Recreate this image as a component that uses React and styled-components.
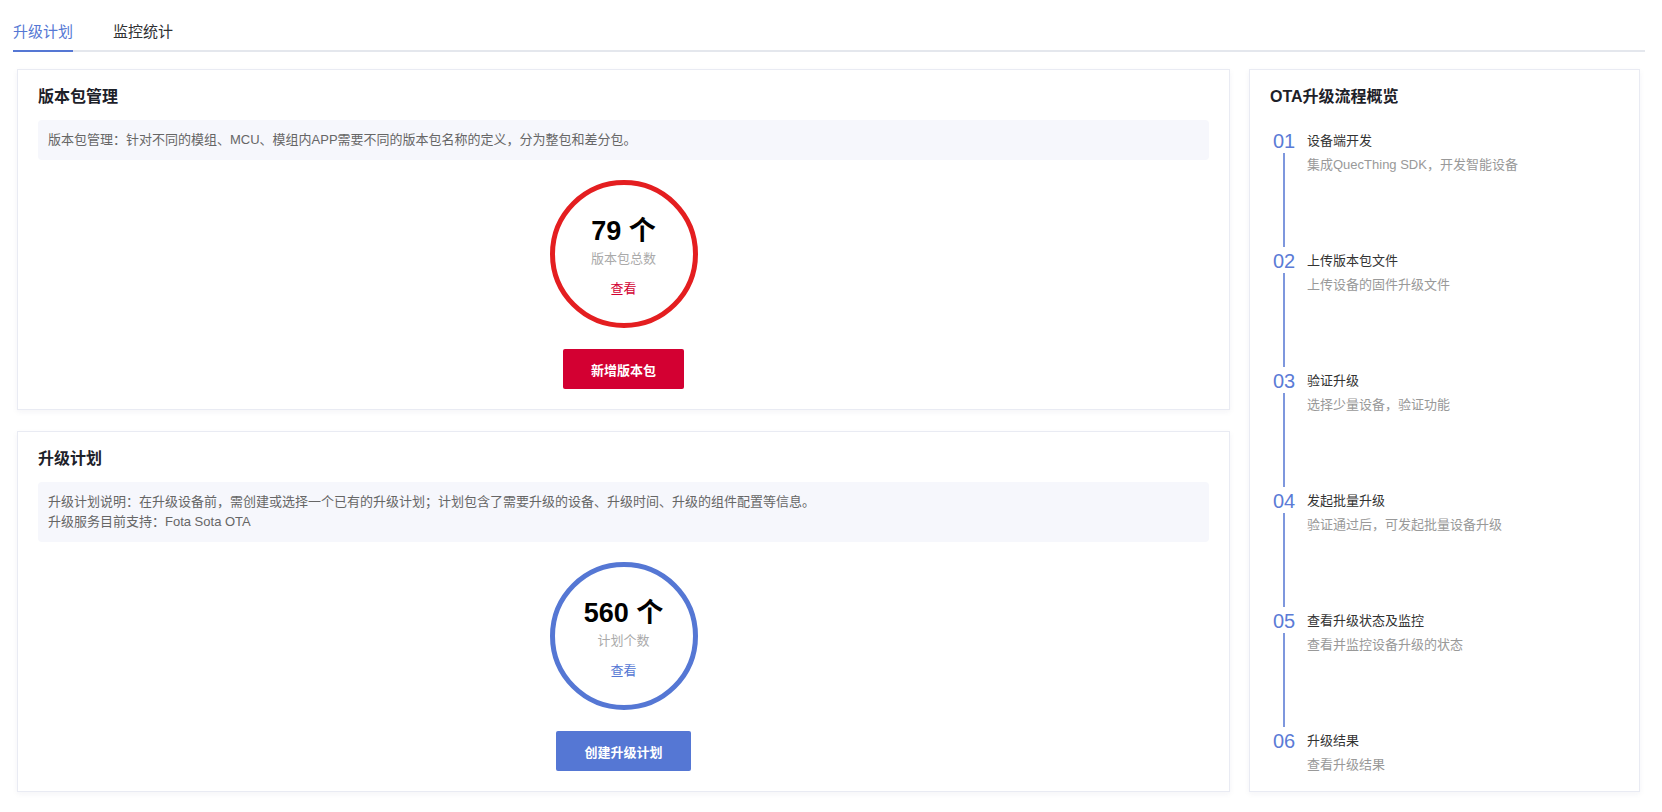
import styled, { createGlobalStyle } from "styled-components";

const steps = [
	{ no: "01", title: "设备端开发", desc: "集成QuecThing SDK，开发智能设备" },
	{ no: "02", title: "上传版本包文件", desc: "上传设备的固件升级文件" },
	{ no: "03", title: "验证升级", desc: "选择少量设备，验证功能" },
	{ no: "04", title: "发起批量升级", desc: "验证通过后，可发起批量设备升级" },
	{ no: "05", title: "查看升级状态及监控", desc: "查看并监控设备升级的状态" },
	{ no: "06", title: "升级结果", desc: "查看升级结果" },
];

const RED = "#d30032";
const BLUE = "#5577d4";

export default function App() {
	return (
		<Page>
			<GlobalStyle />
			<TabBar>
				<Tab $active>升级计划</Tab>
				<Tab>监控统计</Tab>
			</TabBar>
			<Content>
				<LeftColumn>
					<Card>
						<CardTitle>版本包管理</CardTitle>
						<InfoBox>版本包管理：针对不同的模组、MCU、模组内APP需要不同的版本包名称的定义，分为整包和差分包。</InfoBox>
						<StatBlock>
							<Circle $ring="#e41e20">
								<Count>79 个</Count>
								<CountLabel>版本包总数</CountLabel>
								<ViewLink $color={RED}>查看</ViewLink>
							</Circle>
							<ActionButton $bg={RED}>新增版本包</ActionButton>
						</StatBlock>
					</Card>
					<Card>
						<CardTitle>升级计划</CardTitle>
						<InfoBox>
							升级计划说明：在升级设备前，需创建或选择一个已有的升级计划；计划包含了需要升级的设备、升级时间、升级的组件配置等信息。
							<br />
							升级服务目前支持：Fota Sota OTA
						</InfoBox>
						<StatBlock>
							<Circle $ring={BLUE}>
								<Count>560 个</Count>
								<CountLabel>计划个数</CountLabel>
								<ViewLink $color={BLUE}>查看</ViewLink>
							</Circle>
							<ActionButton $bg={BLUE}>创建升级计划</ActionButton>
						</StatBlock>
					</Card>
				</LeftColumn>
				<FlowCard>
					<CardTitle>OTA升级流程概览</CardTitle>
					<StepList>
						{steps.map((s, i) => (
							<Step key={s.no} $last={i === steps.length - 1}>
								<StepMarker>
									<StepNo>{s.no}</StepNo>
									{i < steps.length - 1 && <StepLine />}
								</StepMarker>
								<StepText>
									<StepTitle>{s.title}</StepTitle>
									<StepDesc>{s.desc}</StepDesc>
								</StepText>
							</Step>
						))}
					</StepList>
				</FlowCard>
			</Content>
		</Page>
	);
}

const GlobalStyle = createGlobalStyle`
	* { box-sizing: border-box; }
	body {
		margin: 0;
		background: #ffffff;
		font-family: "Liberation Sans", Arial, "Noto Sans CJK SC", sans-serif;
		color: #333333;
	}
`;

const Page = styled.div`
	padding: 12px 17px 20px 13px;
`;

const TabBar = styled.div`
	display: flex;
	gap: 40px;
	height: 40px;
	position: relative;
	&::after {
		content: "";
		position: absolute;
		left: 0;
		right: 0;
		bottom: 0;
		height: 2px;
		background: #e4e7ed;
	}
`;

const Tab = styled.div`
	position: relative;
	z-index: 1;
	height: 40px;
	line-height: 40px;
	font-size: 15px;
	color: ${(p) => (p.$active ? BLUE : "#303133")};
	border-bottom: 2px solid ${(p) => (p.$active ? BLUE : "transparent")};
	cursor: pointer;
`;

const Content = styled.div`
	display: flex;
	gap: 19px;
	margin: 17px 5px 0 4px;
	align-items: stretch;
`;

const LeftColumn = styled.div`
	flex: 1;
	display: flex;
	flex-direction: column;
	gap: 21px;
`;

const Card = styled.div`
	background: #ffffff;
	border: 1px solid #e9ebf3;
	box-shadow: 0 2px 6px rgba(30, 40, 90, 0.05);
	padding: 16px 20px 20px;
	display: flex;
	flex-direction: column;
`;

const FlowCard = styled(Card)`
	width: 391px;
	flex-shrink: 0;
	padding-bottom: 12px;
`;

const CardTitle = styled.div`
	font-size: 16px;
	line-height: 22px;
	font-weight: 700;
	color: #1d2129;
`;

const InfoBox = styled.div`
	margin-top: 12px;
	background: #f6f7fc;
	border-radius: 4px;
	padding: 10px 10px;
	font-size: 13px;
	line-height: 20px;
	color: #666666;
`;

const StatBlock = styled.div`
	display: flex;
	flex-direction: column;
	align-items: center;
	margin-top: 20px;
`;

const Circle = styled.div`
	width: 148px;
	height: 148px;
	border-radius: 50%;
	border: 5px solid ${(p) => p.$ring};
	display: flex;
	flex-direction: column;
	align-items: center;
	justify-content: center;
	padding-top: 5px;
`;

const Count = styled.div`
	font-size: 27px;
	line-height: 34px;
	font-weight: 700;
	color: #000000;
`;

const CountLabel = styled.div`
	font-size: 13px;
	line-height: 20px;
	color: #aaaaaa;
	margin-top: 1px;
`;

const ViewLink = styled.div`
	font-size: 13px;
	line-height: 20px;
	margin-top: 10px;
	color: ${(p) => p.$color};
	cursor: pointer;
`;

const ActionButton = styled.button`
	margin-top: 21px;
	height: 40px;
	padding: 0 28px;
	border: none;
	border-radius: 2px;
	background: ${(p) => p.$bg};
	color: #ffffff;
	font-family: inherit;
	font-size: 13px;
	font-weight: 700;
	cursor: pointer;
`;

const StepList = styled.div`
	margin: 21px 0 0 2px;
	display: flex;
	flex-direction: column;
`;

const Step = styled.div`
	display: grid;
	grid-template-columns: 35px 1fr;
	height: ${(p) => (p.$last ? "auto" : "120px")};
`;

const StepMarker = styled.div`
	display: flex;
	flex-direction: column;
	align-items: center;
	width: 24px;
`;

const StepNo = styled.div`
	font-size: 20px;
	line-height: 24px;
	color: #5b7bd6;
`;

const StepLine = styled.div`
	flex: 1;
	width: 2px;
	margin-bottom: 2px;
	background: #7e97dd;
`;

const StepText = styled.div`
	display: flex;
	flex-direction: column;
`;

const StepTitle = styled.div`
	font-size: 13px;
	line-height: 24px;
	color: #333333;
`;

const StepDesc = styled.div`
	font-size: 13px;
	line-height: 24px;
	color: #999999;
`;
